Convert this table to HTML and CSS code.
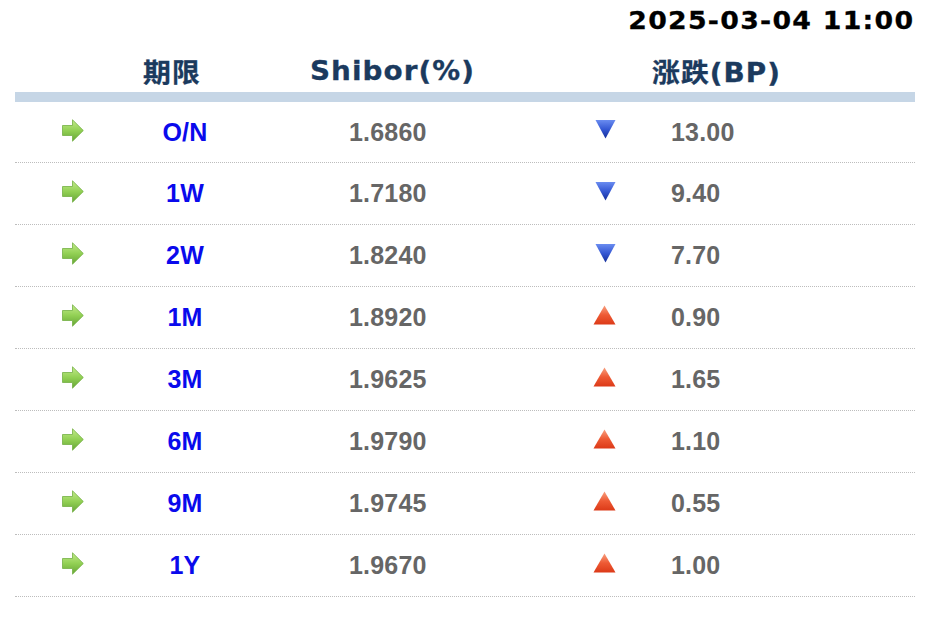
FILE: index.html
```html
<!DOCTYPE html>
<html lang="zh">
<head>
<meta charset="utf-8">
<title>Shibor</title>
<link rel="stylesheet" href="styles.css">
</head>
<body>
<svg width="0" height="0" class="defs">
  <defs>
    <linearGradient id="g-green" x1="0" y1="0" x2="0" y2="1">
      <stop offset="0" stop-color="#c2ea8a"/>
      <stop offset="0.5" stop-color="#92d054"/>
      <stop offset="1" stop-color="#66a636"/>
    </linearGradient>
    <linearGradient id="g-blue" x1="0" y1="0" x2="0" y2="1">
      <stop offset="0" stop-color="#6a8cf0"/>
      <stop offset="0.5" stop-color="#3558d4"/>
      <stop offset="1" stop-color="#142f9a"/>
    </linearGradient>
    <linearGradient id="g-red" x1="0" y1="0" x2="0" y2="1">
      <stop offset="0" stop-color="#f8a080"/>
      <stop offset="0.5" stop-color="#ee5a34"/>
      <stop offset="1" stop-color="#dc3a18"/>
    </linearGradient>
    <symbol id="arrow" viewBox="0 0 22 23">
      <path d="M0.5 6.5 H10.5 V0.8 L21.3 11.5 L10.5 22.2 V16.5 H0.5 Z" fill="url(#g-green)" stroke="#74b044" stroke-width="0.8" stroke-linejoin="round"/>
    </symbol>
    <symbol id="down" viewBox="0 0 21 20">
      <path d="M0.5 1 H20.5 L10.5 19.5 Z" fill="url(#g-blue)"/>
    </symbol>
    <symbol id="up" viewBox="0 0 23 20">
      <path d="M11.5 0.5 L22.5 19.5 H0.5 Z" fill="url(#g-red)"/>
    </symbol>
  </defs>
</svg>
<div class="page">
  <div class="date"><span class="date-text">2025-03-04 11:00</span></div>
  <div class="head">
    <div class="h h1"><span class="ht">期限</span></div>
    <div class="h h2"><span class="ht">Shibor(%)</span></div>
    <div class="h h3"><span class="ht">涨跌(BP)</span></div>
  </div>
  <div class="bar"></div>
  <div class="rows">
    <div class="row">
      <div class="c-icon"><svg class="arrow"><use href="#arrow"/></svg></div>
      <div class="c-term">O/N</div>
      <div class="c-val">1.6860</div>
      <div class="c-tri"><svg class="tri"><use href="#down"/></svg></div>
      <div class="c-chg">13.00</div>
    </div>
    <div class="row">
      <div class="c-icon"><svg class="arrow"><use href="#arrow"/></svg></div>
      <div class="c-term">1W</div>
      <div class="c-val">1.7180</div>
      <div class="c-tri"><svg class="tri"><use href="#down"/></svg></div>
      <div class="c-chg">9.40</div>
    </div>
    <div class="row">
      <div class="c-icon"><svg class="arrow"><use href="#arrow"/></svg></div>
      <div class="c-term">2W</div>
      <div class="c-val">1.8240</div>
      <div class="c-tri"><svg class="tri"><use href="#down"/></svg></div>
      <div class="c-chg">7.70</div>
    </div>
    <div class="row">
      <div class="c-icon"><svg class="arrow"><use href="#arrow"/></svg></div>
      <div class="c-term">1M</div>
      <div class="c-val">1.8920</div>
      <div class="c-tri"><svg class="tri up"><use href="#up"/></svg></div>
      <div class="c-chg">0.90</div>
    </div>
    <div class="row">
      <div class="c-icon"><svg class="arrow"><use href="#arrow"/></svg></div>
      <div class="c-term">3M</div>
      <div class="c-val">1.9625</div>
      <div class="c-tri"><svg class="tri up"><use href="#up"/></svg></div>
      <div class="c-chg">1.65</div>
    </div>
    <div class="row">
      <div class="c-icon"><svg class="arrow"><use href="#arrow"/></svg></div>
      <div class="c-term">6M</div>
      <div class="c-val">1.9790</div>
      <div class="c-tri"><svg class="tri up"><use href="#up"/></svg></div>
      <div class="c-chg">1.10</div>
    </div>
    <div class="row">
      <div class="c-icon"><svg class="arrow"><use href="#arrow"/></svg></div>
      <div class="c-term">9M</div>
      <div class="c-val">1.9745</div>
      <div class="c-tri"><svg class="tri up"><use href="#up"/></svg></div>
      <div class="c-chg">0.55</div>
    </div>
    <div class="row">
      <div class="c-icon"><svg class="arrow"><use href="#arrow"/></svg></div>
      <div class="c-term">1Y</div>
      <div class="c-val">1.9670</div>
      <div class="c-tri"><svg class="tri up"><use href="#up"/></svg></div>
      <div class="c-chg">1.00</div>
    </div>
  </div>
</div>
</body>
</html>
```
FILE: styles.css
```css
html, body {
  margin: 0;
  padding: 0;
  background: #ffffff;
}
.defs {
  position: absolute;
  width: 0;
  height: 0;
  overflow: hidden;
}
.page {
  width: 938px;
  padding-left: 15px;
  box-sizing: border-box;
}
.date {
  width: 898px;
  height: 40px;
  line-height: 41px;
  text-align: right;
  font-family: "DejaVu Sans", Verdana, sans-serif;
  font-weight: bold;
  font-size: 25px;
  letter-spacing: 1.2px;
  color: #000;
  -webkit-text-stroke: 0.3px #000;
}
.date-text {
  display: inline-block;
  transform: scaleX(1.07);
  transform-origin: right center;
  margin-right: -1.2px;
}
.head {
  display: flex;
  height: 52px;
  align-items: center;
  padding-top: 9px;
  box-sizing: border-box;
  padding-left: 128px;
  font-family: "DejaVu Sans", "Noto Sans CJK SC", sans-serif;
  font-weight: bold;
  font-size: 26px;
  letter-spacing: 1px;
  color: #1b3a5e;
  -webkit-text-stroke: 0.3px #1b3a5e;
}
.ht {
  display: inline-block;
  transform: scaleX(1.07);
  transform-origin: left center;
}
.h1 { width: 167px; }
.h2 { width: 342px; }
.bar {
  width: 900px;
  height: 10px;
  background: #c6d6e6;
}
.row {
  width: 900px;
  height: 61px;
  display: grid;
  grid-template-columns: 115px 110px 320px 90px 265px;
  align-items: center;
  border-bottom: 1px dotted #bdbdbd;
  font-family: "Liberation Sans", Arial, sans-serif;
  font-weight: bold;
  font-size: 25px;
  letter-spacing: 0.2px;
}
.row:first-child { height: 60px; }
.c-icon {
  padding-left: 47px;
  display: flex;
  align-items: center;
  padding-bottom: 4px;
}
.arrow {
  width: 22px;
  height: 23px;
}
.c-term {
  text-align: center;
  color: #0a0aec;
}
.c-val {
  padding-left: 109px;
  color: #666666;
}
.c-tri {
  padding-left: 35px;
  display: flex;
  align-items: center;
  padding-bottom: 6px;
}
.tri {
  width: 21px;
  height: 20px;
}
.tri.up {
  width: 23px;
  height: 20px;
  margin-left: -2px;
}
.c-chg {
  padding-left: 21px;
  color: #666666;
}
```
